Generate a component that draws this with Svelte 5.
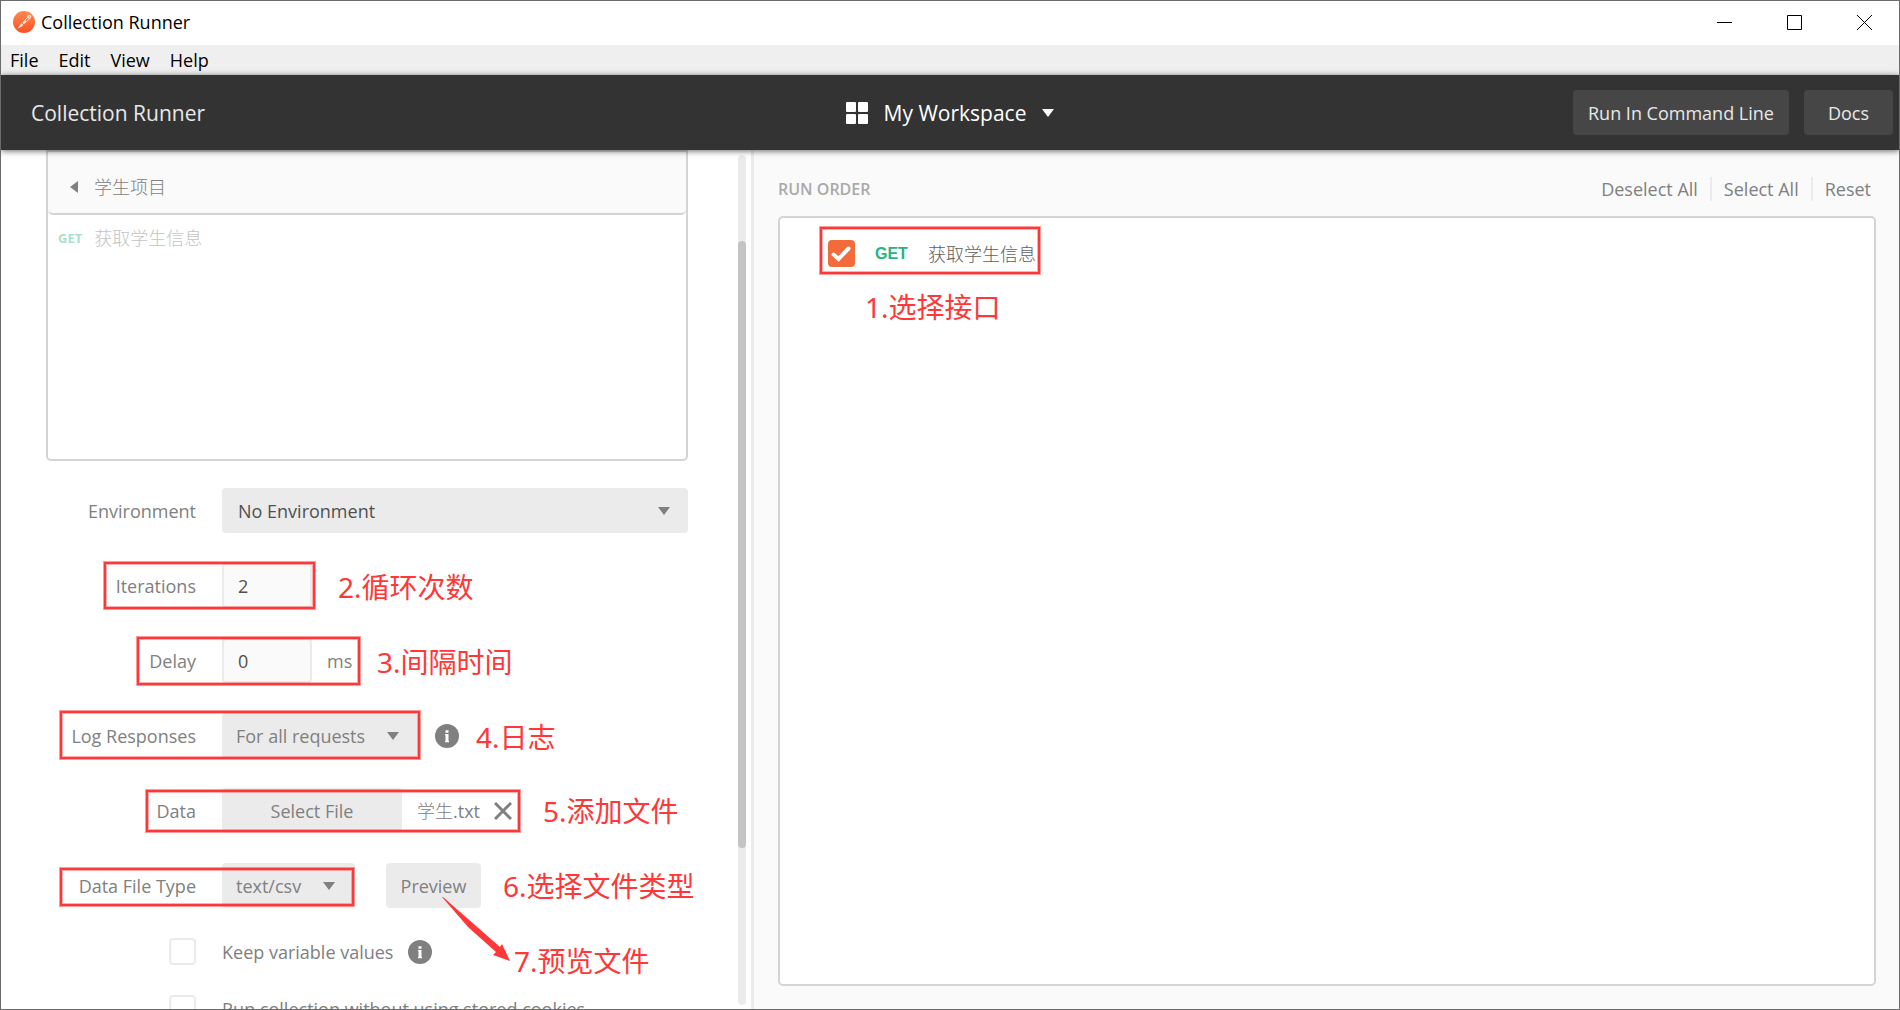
<script>
let menus = ['File', 'Edit', 'View', 'Help']

let environment = $state('No Environment')
let iterations = $state('2')
let delay = $state('0')
let logResponses = $state('For all requests')
let fileType = $state('text/csv')
let keepValues = $state(false)
let noCookies = $state(false)
let selected = $state(true)

// notes pinned over the window: a frame and its caption
const notes = [
    { text: '1.选择接口', frame: [820, 227, 220, 47], at: [865, 286] },
    { text: '2.循环次数', frame: [104, 562, 211, 47], at: [338, 566] },
    { text: '3.间隔时间', frame: [137, 637, 223, 48], at: [377, 641] },
    { text: '4.日志', frame: [60, 711, 360, 48], at: [476, 716] },
    { text: '5.添加文件', frame: [146, 790, 374, 42], at: [543, 790] },
    { text: '6.选择文件类型', frame: [60, 868, 294, 38], at: [503, 865] },
    { text: '7.预览文件', at: [514, 940] },
]

function frameStyle([x, y, w, h]) {
    return `left:${x}px;top:${y}px;width:${w}px;height:${h}px`
}
</script>

{#snippet caret()}
    <svg class="caret" width="12" height="8" viewBox="0 0 12 8" aria-hidden="true"><path d="M0 0h12L6 8z" /></svg>
{/snippet}

{#snippet info()}
    <svg class="info" width="24" height="24" viewBox="0 0 24 24" aria-hidden="true">
        <circle cx="12" cy="12" r="12" fill="#808080" />
        <path d="M10.500 6.300h3v2.400h-3zM10 10h3.500v7h.5v1.200h-4V17h.5v-5.800H10z" fill="#fff" />
    </svg>
{/snippet}

<div class="window">
    <div class="titlebar">
        <svg width="22" height="22" viewBox="0 0 22 22" aria-hidden="true">
            <defs>
                <linearGradient id="logo" x1="0" y1="0" x2="0" y2="1">
                    <stop offset="0" stop-color="#ff8b4d" />
                    <stop offset="1" stop-color="#fb4f26" />
                </linearGradient>
            </defs>
            <circle cx="11" cy="11" r="11" fill="url(#logo)" />
            <path d="M4.500 17.500l2.500-3.500 5-5 1.800 1.600-5 5z" fill="#ffe9df" />
            <path d="M12 9l3-3M13.800 10.500l3-3" stroke="#ffe9df" fill="none" />
            <circle cx="16.300" cy="5.700" r="2" fill="#ffe9df" />
            <path d="M15.800 5.500l1.500 1M9 12l2 2" stroke="#fb6a3a" fill="none" />
        </svg>
        <span class="title">Collection Runner</span>
        <div class="controls">
            <button aria-label="Minimize"><svg width="15" height="15" viewBox="0 0 15 15"><path d="M0 7.500h15" /></svg></button>
            <button aria-label="Maximize"><svg width="15" height="15" viewBox="0 0 15 15"><path d="M.5.500h14v14H.5z" /></svg></button>
            <button aria-label="Close"><svg width="15" height="15" viewBox="0 0 15 15"><path d="M0 0l15 15M15 0L0 15" /></svg></button>
        </div>
    </div>

    <nav class="menubar">
        {#each menus as menu}
            <button>{menu}</button>
        {/each}
    </nav>

    <header>
        <h1>Collection Runner</h1>
        <button class="workspace">
            <svg width="22" height="22" viewBox="0 0 22 22" aria-hidden="true">
                <rect width="10" height="10" rx="1" /><rect x="12" width="10" height="10" rx="1" />
                <rect y="12" width="10" height="10" rx="1" /><rect x="12" y="12" width="10" height="10" rx="1" />
            </svg>
            My Workspace
            {@render caret()}
        </button>
        <div class="actions">
            <button>Run In Command Line</button>
            <button class="docs">Docs</button>
        </div>
    </header>

    <main>
        <section class="setup">
            <div class="scroll">
                <div class="collection">
                    <div class="crumb">
                        <svg width="8" height="12" viewBox="0 0 8 12" aria-hidden="true"><path d="M8 0v12L0 6z" fill="#808080" /></svg>
                        <span class="name">学生项目</span>
                    </div>
                    <div class="request"><b>GET</b><span class="name">获取学生信息</span></div>
                </div>

                <form>
                    <div class="row">
                        <label for="env">Environment</label>
                        <div class="select wide">
                            <select id="env" bind:value={environment}><option>No Environment</option></select>
                            {@render caret()}
                        </div>
                    </div>
                    <div class="row">
                        <label for="iterations">Iterations</label>
                        <input id="iterations" type="text" bind:value={iterations}>
                    </div>
                    <div class="row">
                        <label for="delay">Delay</label>
                        <input id="delay" type="text" bind:value={delay}>
                        <span class="unit">ms</span>
                    </div>
                    <div class="row">
                        <label for="log">Log Responses</label>
                        <div class="select log">
                            <select id="log" bind:value={logResponses}><option>For all requests</option></select>
                            {@render caret()}
                        </div>
                        {@render info()}
                    </div>
                    <div class="row">
                        <label for="file">Data</label>
                        <button type="button" id="file" class="btn file">Select File</button>
                        <span class="unit"><span class="name">学生</span>.txt</span>
                        <button type="button" class="clear" aria-label="Remove file">
                            <svg width="18" height="18" viewBox="0 0 18 18"><path d="M1 1l16 16M17 1L1 17" stroke="#808080" stroke-width="3" /></svg>
                        </button>
                    </div>
                    <div class="row">
                        <label for="type">Data File Type</label>
                        <div class="select type">
                            <select id="type" bind:value={fileType}><option>text/csv</option></select>
                            {@render caret()}
                        </div>
                        <button type="button" class="btn preview">Preview</button>
                    </div>
                    <div class="row check">
                        <input id="keep" type="checkbox" bind:checked={keepValues}>
                        <label for="keep">Keep variable values</label>
                        {@render info()}
                    </div>
                    <div class="row check">
                        <input id="cookies" type="checkbox" bind:checked={noCookies}>
                        <label for="cookies">Run collection without using stored cookies</label>
                    </div>
                </form>
            </div>
            <div class="track"><div class="thumb"></div></div>
        </section>

        <section class="order">
            <div class="order-head">
                <h2>RUN ORDER</h2>
                <div class="links">
                    <button>Deselect All</button>
                    <button>Select All</button>
                    <button>Reset</button>
                </div>
            </div>
            <div class="list">
                <label class="item">
                    <span class="tick">
                        <input type="checkbox" bind:checked={selected}>
                        {#if selected}
                            <svg width="27" height="27" viewBox="0 0 27 27" aria-hidden="true"><path d="M5.500 14.500l5 4.500L20.500 8.500" /></svg>
                        {/if}
                    </span>
                    <b>GET</b>
                    <span class="name">获取学生信息</span>
                </label>
            </div>
        </section>
    </main>

    <div class="notes">
        {#each notes as note}
            {#if note.frame}
                <div class="frame" style={frameStyle(note.frame)}></div>
            {/if}
            <span class="caption" style="left:{note.at[0]}px;top:{note.at[1]}px">{note.text}</span>
        {/each}
        <svg class="arrow" width="70" height="66" viewBox="0 0 70 66" aria-hidden="true"><path d="M0 0L1 0L58 50L60 47L68 64L51 58L54 55L26 30Z" fill="#fe3838" /></svg>
    </div>
</div>

<style>
:global(body) {
    margin: 0;
}

* {
    box-sizing: border-box;
}

.window {
    position: relative;
    display: flex;
    flex-direction: column;
    height: 100vh;
    border: 1px solid #6b6b6b;
    background: #fff;
    color: #808080;
    font: 18px/24px "Open Sans", "Noto Sans CJK SC", sans-serif;
    overflow: hidden;
}

button,
input,
select {
    font: inherit;
    color: inherit;
    border: 0;
    background: none;
    padding: 0;
    margin: 0;
}

svg {
    display: block;
    flex: none;
}

.name {
    font-weight: 300;
}

.titlebar {
    display: flex;
    align-items: center;
    gap: 6px;
    flex: 0 0 44px;
    padding: 0 0 2px 12px;
    color: #000;
}

.controls {
    display: flex;
    height: 100%;
    margin-left: auto;
}

.controls button {
    display: grid;
    place-items: center;
    width: 70px;
}

.controls path {
    fill: none;
    stroke: #000;
}

.menubar {
    display: flex;
    gap: 20px;
    flex: 0 0 30px;
    padding-left: 9px;
    background: #efefef;
    color: #000;
}

header {
    position: relative;
    z-index: 1;
    display: grid;
    grid-template-columns: 1fr auto 1fr;
    align-items: center;
    flex: 0 0 75px;
    padding: 0 6px;
    background: #333;
    color: #e8e8e8;
    box-shadow: 0 1px 6px rgba(0, 0, 0, .6);
}

h1 {
    margin: 0;
    padding-left: 24px;
    font-size: 21px;
    font-weight: 400;
}

.workspace {
    display: flex;
    align-items: center;
    gap: 16px;
    color: #fff;
    font-size: 21px;
}

.workspace svg {
    fill: #fff;
}

.actions {
    display: flex;
    justify-content: flex-end;
    gap: 15px;
}

.actions button {
    height: 45px;
    padding: 0 15px;
    border-radius: 4px;
    background: #464646;
}

.actions .docs {
    padding: 0 24px;
}

main {
    display: flex;
    flex: 1;
    min-height: 0;
}

.setup {
    display: flex;
    flex: 0 0 753px;
    border-right: 3px solid #ebebeb;
}

.scroll {
    flex: 1;
    padding: 0 50px 0 45px;
    overflow: hidden;
}

.collection {
    height: 311px;
    border: 2px solid #d4d4d4;
    border-top: 0;
    border-radius: 0 0 5px 5px;
}

.crumb {
    display: flex;
    align-items: center;
    gap: 16px;
    height: 65px;
    padding: 8px 0 0 22px;
    border-top: 2px solid #d4d4d4;
    border-bottom: 2px solid #d4d4d4;
    border-radius: 0 0 5px 5px;
    background: #fafafa;
}

.request {
    display: flex;
    align-items: center;
    gap: 12px;
    padding: 11px 0 0 10px;
    color: #c4c4c4;
}

.request b {
    color: #a8e1cb;
    font-size: 13px;
}

form {
    display: flex;
    flex-direction: column;
    gap: 30px;
    padding-top: 27px;
}

.row {
    display: flex;
    align-items: center;
    height: 45px;
}

.row > label:first-child {
    flex: 0 0 150px;
    margin-right: 26px;
    text-align: right;
}

.row input[type="text"] {
    width: 90px;
    height: 45px;
    padding: 0 14px;
    border: 2px solid #ebebeb;
    border-radius: 4px;
    background: #fafafa;
    color: #505050;
}

.unit {
    margin-left: 15px;
}

.select {
    display: grid;
    align-items: center;
}

.select > :global(*) {
    grid-area: 1 / 1;
}

.select select {
    width: 100%;
    height: 45px;
    padding: 0 14px;
    border-radius: 4px;
    background: #ebebeb;
    appearance: none;
}

.select .caret {
    justify-self: end;
    margin-right: 20px;
    fill: #808080;
    pointer-events: none;
}

.wide {
    flex: 1;
}

.wide select {
    padding: 0 16px;
    color: #505050;
}

.wide .caret {
    margin-right: 18px;
}

.log {
    width: 197px;
    margin-right: 16px;
}

.type {
    width: 133px;
    margin-right: 31px;
}

.btn {
    height: 45px;
    border-radius: 4px;
    background: #ebebeb;
}

.file {
    width: 180px;
}

.preview {
    width: 95px;
}

.clear {
    margin-left: 14px;
}

.check {
    height: 27px;
}

.check input {
    flex: none;
    width: 27px;
    height: 27px;
    margin: 0 26px 0 123px;
    border: 2px solid #ebebeb;
    border-radius: 4px;
    appearance: none;
}

.check label {
    margin-right: 15px;
    white-space: nowrap;
}

.track {
    flex: 0 0 8px;
    margin: 5px 5px 4px 0;
    border-radius: 4px;
    background: #ebebeb;
}

.thumb {
    height: 607px;
    margin-top: 86px;
    border-radius: 4px;
    background: #c4c4c4;
}

.order {
    display: flex;
    flex-direction: column;
    flex: 1;
    padding: 24px 23px 23px 24px;
    background: #fafafa;
}

.order-head {
    display: flex;
    justify-content: space-between;
    align-items: center;
    height: 42px;
    padding-bottom: 12px;
}

h2 {
    margin: 0;
    color: #a9a9a9;
    font-size: 16px;
    font-weight: 600;
}

.links {
    display: flex;
    margin-right: -7px;
}

.links button {
    height: 24px;
    padding: 0 12px;
}

.links button + button {
    border-left: 2px solid #ebebeb;
}

.list {
    flex: 1;
    padding: 22px 48px;
    border: 2px solid #d4d4d4;
    border-radius: 5px;
    background: #fff;
}

.item {
    display: flex;
    align-items: center;
    gap: 20px;
    width: fit-content;
}

.item .name {
    color: #606060;
}

.item b {
    color: #26b47f;
    font: bold 16px "Liberation Sans", sans-serif;
}

.tick {
    display: grid;
}

.tick > * {
    grid-area: 1 / 1;
}

.tick input {
    width: 27px;
    height: 27px;
    border: 2px solid #ebebeb;
    border-radius: 4px;
    appearance: none;
}

.tick input:checked {
    border-color: #f26b3a;
    background: #f26b3a;
}

.tick path {
    fill: none;
    stroke: #fff;
    stroke-width: 4;
    stroke-linecap: round;
}

.notes {
    position: absolute;
    inset: -1px;
    z-index: 2;
    pointer-events: none;
}

.frame {
    position: absolute;
    border: 2px solid #fe3838;
    box-shadow: 0 0 0 1px rgba(254, 56, 56, .5), inset 0 0 0 1px rgba(254, 56, 56, .4);
}

.caption {
    position: absolute;
    color: #fe3838;
    font-family: "Noto Sans", "Noto Sans CJK SC", sans-serif;
    font-size: 28px;
    line-height: 42px;
    white-space: nowrap;
}

.arrow {
    position: absolute;
    left: 442px;
    top: 897px;
}
</style>
